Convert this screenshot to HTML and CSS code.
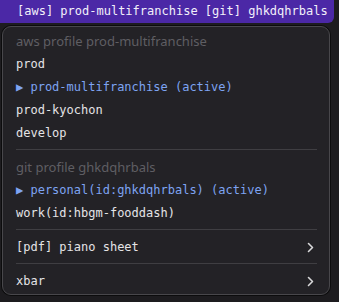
FILE: index.html
```html
<!DOCTYPE html>
<html lang="en">

<head>
    <meta charset="UTF-8">
    <title>xbar</title>

    <link rel="stylesheet" href="styles.css">
</head>

<body>
    <div class="menubar">[aws] prod-multifranchise [git] ghkdqhrbals</div>

    <div class="menu">
        <div class="header">aws profile prod-multifranchise</div>
        <div class="item">prod</div>
        <div class="item active">▶ prod-multifranchise (active)</div>
        <div class="item">prod-kyochon</div>
        <div class="item">develop</div>
        <div class="separator"></div>

        <div class="header">git profile ghkdqhrbals</div>
        <div class="item active">▶ personal(id:ghkdqhrbals) (active)</div>
        <div class="item">work(id:hbgm-fooddash)</div>
        <div class="separator"></div>

        <div class="item submenu">
            <span>[pdf] piano sheet</span>
            <svg class="chevron" width="7" height="11" viewBox="0 0 7 11">
                <path d="M1.5 1.5 L5.5 5.5 L1.5 9.5" fill="none" stroke="#d8d8da" stroke-width="1.6" stroke-linecap="round" stroke-linejoin="round"/>
            </svg>
        </div>
        <div class="separator"></div>

        <div class="item submenu">
            <span>xbar</span>
            <svg class="chevron" width="7" height="11" viewBox="0 0 7 11">
                <path d="M1.5 1.5 L5.5 5.5 L1.5 9.5" fill="none" stroke="#d8d8da" stroke-width="1.6" stroke-linecap="round" stroke-linejoin="round"/>
            </svg>
        </div>
    </div>
</body>

</html>
```

FILE: styles.css
```css
body {
    margin: 0;
    background-color: #1d1c1f;
    width: 339px;
    height: 302px;
    overflow: hidden;
}

.menubar {
    width: 317px;
    height: 23px;
    padding-left: 17px;
    background-color: #4b28a6;
    border-bottom-right-radius: 6px;
    color: #f2f0fa;
    font-family: "DejaVu Sans Mono", monospace;
    font-size: 12px;
    line-height: 23px;
    white-space: nowrap;
}

.menu {
    margin: 3px 0 0 2px;
    width: 328px;
    height: 269px;
    padding-top: 3px;
    box-sizing: border-box;
    background-color: #232226;
    border: 1px solid #48474b;
    border-radius: 9px;
    box-shadow: 0 0 0 1px #0c0c0d;
}

.header {
    height: 23px;
    padding-left: 13px;
    color: #5f5e63;
    font-family: "Noto Sans", "Liberation Sans", sans-serif;
    font-size: 13px;
    line-height: 22px;
}

.item {
    height: 23px;
    padding: 0 15px 0 13px;
    color: #e4e4e6;
    font-family: "DejaVu Sans Mono", monospace;
    font-size: 12px;
    line-height: 23px;
    white-space: nowrap;
}

.item.active {
    color: #7ea4f2;
}

.submenu {
    display: flex;
    justify-content: space-between;
    align-items: center;
}

.separator {
    height: 1px;
    margin: 4px 12px 6px 13px;
    background-color: #3f3e42;
}
```
